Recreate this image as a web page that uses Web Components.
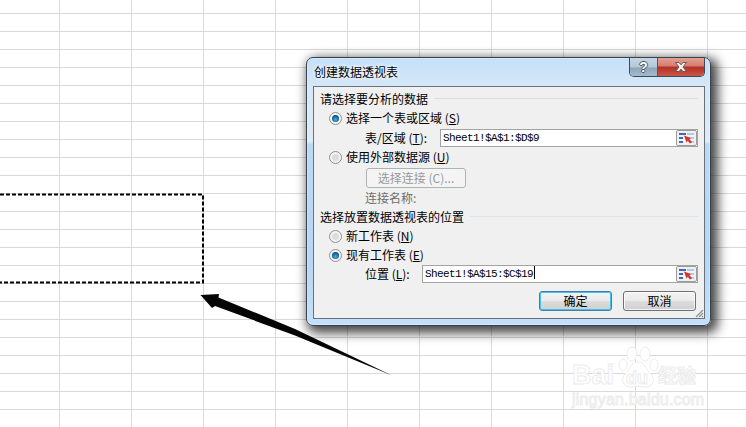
<!DOCTYPE html>
<html lang="zh-CN">
<head>
<meta charset="utf-8">
<title>创建数据透视表</title>
<style>
    html, body { margin: 0; padding: 0; background: #fff; }
    body { font: 12px "Noto Sans CJK SC", sans-serif; color: #000; }
</style>
</head>
<body>
<sheet-canvas>
    <copy-marquee></copy-marquee>
    <pointer-arrow></pointer-arrow>
    <pivot-dialog heading="创建数据透视表">
        <group-title>请选择要分析的数据</group-title>
        <radio-row checked>选择一个表或区域 (<u>S</u>)</radio-row>
        <range-row label-width="75" value="Sheet1!$A$1:$D$9">表/区域 (<u>T</u>):</range-row>
        <radio-row>使用外部数据源 (<u>U</u>)</radio-row>
        <push-button disabled class="connect">选择连接 (C)...</push-button>
        <muted-line>连接名称:</muted-line>
        <group-title tint>选择放置数据透视表的位置</group-title>
        <radio-row>新工作表 (<u>N</u>)</radio-row>
        <radio-row checked short>现有工作表 (<u>E</u>)</radio-row>
        <range-row label-width="57" value="Sheet1!$A$15:$C$19" caret>位置 (<u>L</u>):</range-row>
        <button-bar>
            <push-button primary>确定</push-button>
            <push-button>取消</push-button>
        </button-bar>
    </pivot-dialog>
    <baidu-mark></baidu-mark>
</sheet-canvas>

<script>
class SheetCanvas extends HTMLElement {
    constructor() {
        super();
        this.shadowDOM = this.attachShadow({ mode: 'open' });
    }
    connectedCallback() {
        this.shadowDOM.innerHTML = `
        <style>
            :host {
                display: block;
                position: relative;
                width: 746px;
                height: 427px;
                overflow: hidden;
                background-color: #fff;
                background-image:
                    linear-gradient(90deg, #d9d9d9 1px, transparent 1px),
                    linear-gradient(180deg, #d9d9d9 1px, transparent 1px);
                background-size: 72px 18px;
                background-position: 59px 13px;
            }
        </style>
        <slot></slot>`;
    }
}

class CopyMarquee extends HTMLElement {
    constructor() {
        super();
        this.shadowDOM = this.attachShadow({ mode: 'open' });
    }
    connectedCallback() {
        this.shadowDOM.innerHTML = `
        <style>
            :host { position: absolute; left: 0; top: 190px; width: 210px; height: 100px; }
            svg { display: block; }
        </style>
        <svg width="210" height="100" viewBox="0 190 210 100">
            <path d="M0 194.500H203V282.500H0" fill="none" stroke="#000" stroke-width="2" stroke-dasharray="4 2"/>
        </svg>`;
    }
}

class PointerArrow extends HTMLElement {
    constructor() {
        super();
        this.shadowDOM = this.attachShadow({ mode: 'open' });
    }
    connectedCallback() {
        this.shadowDOM.innerHTML = `
        <style>
            :host { position: absolute; left: 195px; top: 285px; width: 200px; height: 95px; }
            svg { display: block; }
        </style>
        <svg width="200" height="95" viewBox="195 285 200 95">
            <path d="M200.500 295L219 294L218.500 297.500L295 329L392 375.500L295 335.500L215 306L212 308Z" fill="#050505"/>
        </svg>`;
    }
}

class PivotDialog extends HTMLElement {
    constructor() {
        super();
        this.shadowDOM = this.attachShadow({ mode: 'open' });
    }
    connectedCallback() {
        this.shadowDOM.innerHTML = `
        <style>
            :host {
                position: absolute;
                left: 306px;
                top: 57px;
                width: 405px;
                height: 269px;
                box-sizing: border-box;
                display: flex;
                flex-direction: column;
                padding: 0 5px 6px 6px;
                border: 1px solid #39424b;
                border-radius: 7px;
                background: linear-gradient(180deg, #c4e0f8 0, #d5e7f8 28px, #dfebf6 84px, #bcd9f4 86px, #b6d6f4 200px, #c5e0f8 100%);
                box-shadow: 4px 4px 11px 3px rgba(0, 0, 0, .72), 0 0 0 1px rgba(255, 255, 255, .25) inset;
            }
            .caption {
                flex: none;
                height: 28px;
                display: flex;
                align-items: flex-start;
            }
            .title {
                flex: 1;
                padding: 6px 0 0 1px;
                line-height: 16px;
                font-size: 12px;
                color: #000;
                text-shadow: 0 0 4px #fff, 0 0 4px #fff;
            }
            .panel {
                flex: 1;
                display: flex;
                flex-direction: column;
                box-sizing: border-box;
                padding: 2px 6px 0 6px;
                border: 1px solid #66727d;
                background: #f0f0f0;
                position: relative;
            }
            .grip {
                position: absolute;
                right: 0;
                bottom: 0;
                width: 9px;
                height: 9px;
            }
        </style>
        <div class="caption">
            <div class="title">${this.getAttribute('heading')}</div>
            <caption-buttons></caption-buttons>
        </div>
        <div class="panel">
            <slot></slot>
            <svg class="grip" viewBox="0 0 9 9">
                <path d="M8 1L1 8M8 4L4 8M8 7L7 8" stroke="#8b949b" stroke-width="1.200" fill="none"/>
            </svg>
        </div>`;
    }
}

class CaptionButtons extends HTMLElement {
    constructor() {
        super();
        this.shadowDOM = this.attachShadow({ mode: 'open' });
    }
    connectedCallback() {
        this.shadowDOM.innerHTML = `
        <style>
            :host {
                display: flex;
                height: 19px;
                box-sizing: border-box;
                border: 1px solid #3e4a56;
                border-top: 0;
                border-radius: 0 0 5px 5px;
                overflow: hidden;
            }
            .help {
                width: 27px;
                display: flex;
                align-items: center;
                justify-content: center;
                background: linear-gradient(180deg, #c5d6e6 0, #b4c8da 50%, #8fa6ba 55%, #a4bace 100%);
                border-right: 1px solid #5a5560;
                font: bold 14px "Liberation Sans", sans-serif;
                color: #fff;
                text-shadow: 1px 0 0 #4b5560, -1px 0 0 #4b5560, 0 1px 0 #4b5560, 0 -1px 0 #4b5560;
            }
            .close {
                width: 46px;
                display: flex;
                align-items: center;
                justify-content: center;
                background: linear-gradient(180deg, #e3a194 0, #d57f70 42%, #b53126 52%, #c8574a 100%);
            }
        </style>
        <div class="help">?</div>
        <div class="close">
            <svg width="14" height="10" viewBox="0 0 14 10">
                <path d="M1.500 .5H5L7 2.800L9 .5H12.500L9 5L12.500 9.500H9L7 7.200L5 9.500H1.500L5 5Z" fill="#f1f1f1" stroke="#6a4a48" stroke-width=".9"/>
            </svg>
        </div>`;
    }
}

class GroupTitle extends HTMLElement {
    constructor() {
        super();
        this.shadowDOM = this.attachShadow({ mode: 'open' });
    }
    connectedCallback() {
        const line = this.hasAttribute('tint') ? '#dbe4ee' : '#dcdcdc';
        this.shadowDOM.innerHTML = `
        <style>
            :host {
                display: flex;
                align-items: center;
                flex: none;
                gap: 6px;
                height: 19px;
                line-height: 19px;
                color: #000;
            }
            i { flex: 1; height: 1px; background: ${line}; }
        </style>
        <slot></slot><i></i>`;
    }
}

class RadioRow extends HTMLElement {
    constructor() {
        super();
        this.shadowDOM = this.attachShadow({ mode: 'open' });
    }
    connectedCallback() {
        const on = this.hasAttribute('checked');
        const dot = on
            ? '<circle cx="6.500" cy="6.500" r="3.500" fill="url(#on)"/>'
            : '<circle cx="6.500" cy="6.500" r="3.500" fill="#dcdcdc"/>';
        this.shadowDOM.innerHTML = `
        <style>
            :host {
                display: flex;
                flex: none;
                align-items: center;
                gap: 4px;
                height: ${this.hasAttribute('short') ? 18 : 20}px;
                padding-left: 9px;
                line-height: 18px;
            }
            svg { flex: none; display: block; }
        </style>
        <svg width="13" height="13" viewBox="0 0 13 13">
            <defs>
                <radialGradient id="on" cx=".5" cy=".65" r=".6">
                    <stop offset="0" stop-color="#3fb4ea"/>
                    <stop offset="1" stop-color="#06487e"/>
                </radialGradient>
            </defs>
            <circle cx="6.500" cy="6.500" r="6" fill="#f4f4f4" stroke="#8e8f8f"/>
            ${dot}
        </svg>
        <span><slot></slot></span>`;
    }
}

class RangeRow extends HTMLElement {
    constructor() {
        super();
        this.shadowDOM = this.attachShadow({ mode: 'open' });
    }
    connectedCallback() {
        const caret = this.hasAttribute('caret') ? '<b></b>' : '';
        this.shadowDOM.innerHTML = `
        <style>
            :host {
                display: flex;
                flex: none;
                align-items: center;
                height: 18px;
                padding-left: 45px;
                margin-top: 1px;
            }
            .name { flex: none; width: ${this.getAttribute('label-width')}px; line-height: 18px; }
            .box {
                flex: 1;
                height: 18px;
                box-sizing: border-box;
                display: flex;
                align-items: center;
                border: 1px solid #a3a3a3;
                background: #fff;
                padding-left: 2px;
                font: 11px/16px "Liberation Mono", monospace;
                letter-spacing: -.6px;
            }
            .value { flex: 1; white-space: nowrap; }
            b { display: inline-block; width: 1px; height: 13px; margin-left: 1px; background: #000; vertical-align: -2px; }
        </style>
        <span class="name"><slot></slot></span>
        <div class="box">
            <span class="value">${this.getAttribute('value')}${caret}</span>
            <range-picker></range-picker>
        </div>`;
    }
}

class RangePicker extends HTMLElement {
    constructor() {
        super();
        this.shadowDOM = this.attachShadow({ mode: 'open' });
    }
    connectedCallback() {
        this.shadowDOM.innerHTML = `
        <style>
            :host {
                flex: none;
                width: 21px;
                height: 16px;
                box-sizing: border-box;
                border: 1px solid #9c9c9c;
                border-radius: 2px;
                background: #eef0f2;
                display: block;
            }
            svg { display: block; }
        </style>
        <svg width="19" height="14" viewBox="0 0 19 14">
            <rect x="2" y="2" width="15" height="10" fill="#eef3fa"/>
            <path d="M2 2H9V4H2ZM2 6H6V8H2ZM2 10H6V12H2Z" fill="#3f68b4"/>
            <path d="M10 3H17M11 7H17M12 11H17" stroke="#7d9bd0" stroke-width="1"/>
            <path d="M7 4.500L14 7L12.500 8.300L15 11L13 12.500L10.800 9.800L9.500 11.500Z" fill="#d8332a"/>
        </svg>`;
    }
}

class MutedLine extends HTMLElement {
    constructor() {
        super();
        this.shadowDOM = this.attachShadow({ mode: 'open' });
    }
    connectedCallback() {
        this.shadowDOM.innerHTML = `
        <style>
            :host {
                display: block;
                flex: none;
                height: 19px;
                line-height: 19px;
                padding-left: 45px;
                color: #6d6d6d;
            }
        </style>
        <slot></slot>`;
    }
}

class PushButton extends HTMLElement {
    constructor() {
        super();
        this.shadowDOM = this.attachShadow({ mode: 'open' });
    }
    connectedCallback() {
        this.shadowDOM.innerHTML = `
        <style>
            :host {
                display: flex;
                flex: none;
                align-items: center;
                justify-content: center;
                box-sizing: border-box;
                width: 73px;
                height: 20px;
                border: 1px solid #707070;
                border-radius: 3px;
                background: linear-gradient(180deg, #f3f3f3 0, #ebebeb 48%, #dcdcdc 52%, #cfcfcf 100%);
                box-shadow: inset 0 0 0 1px rgba(255, 255, 255, .75);
                line-height: 18px;
            }
            :host([primary]) {
                border-color: #3c7fb1;
                box-shadow: inset 0 0 0 1px #48c0ec;
            }
            :host([disabled]) {
                width: 100px;
                margin: 1px 0 0 46px;
                color: #9a9a9a;
                border-color: #adb2b5;
                background: #f4f4f4;
                box-shadow: none;
            }
        </style>
        <slot></slot>`;
    }
}

class ButtonBar extends HTMLElement {
    constructor() {
        super();
        this.shadowDOM = this.attachShadow({ mode: 'open' });
    }
    connectedCallback() {
        this.shadowDOM.innerHTML = `
        <style>
            :host {
                display: flex;
                flex: none;
                justify-content: flex-end;
                gap: 11px;
                margin-top: 8px;
                padding-right: 2px;
            }
        </style>
        <slot></slot>`;
    }
}

class BaiduMark extends HTMLElement {
    constructor() {
        super();
        this.shadowDOM = this.attachShadow({ mode: 'open' });
    }
    connectedCallback() {
        this.shadowDOM.innerHTML = `
        <style>
            :host {
                position: absolute;
                left: 572px;
                top: 346px;
                width: 136px;
                height: 64px;
                display: grid;
                grid-template-columns: 46px 40px 46px;
                grid-template-rows: 44px 20px;
                align-items: end;
                color: rgba(255, 255, 255, .9);
                -webkit-text-stroke: 1px #ececec;
                font-family: "Liberation Sans", sans-serif;
            }
            .bai { font-size: 27px; font-weight: bold; line-height: 28px; padding-bottom: 1px; }
            .paw { position: relative; height: 44px; }
            .paw svg { position: absolute; left: 0; top: 0; }
            .du {
                position: absolute;
                left: 8px;
                bottom: 2px;
                font-size: 18px;
                font-weight: bold;
                line-height: 20px;
            }
            .jy {
                font: bold 19px/26px "Noto Sans CJK SC", sans-serif;
                padding-bottom: 2px;
                white-space: nowrap;
            }
            .url {
                grid-column: 1 / -1;
                align-self: center;
                font-size: 16px;
                letter-spacing: .2px;
                line-height: 18px;
                white-space: nowrap;
            }
        </style>
        <span class="bai">Bai</span>
        <span class="paw">
            <svg width="42" height="44" viewBox="0 0 42 44" fill="rgba(255,255,255,.9)" stroke="#ececec" stroke-width="1">
                <ellipse cx="5" cy="19" rx="4" ry="6"/>
                <ellipse cx="14" cy="8" rx="5" ry="7"/>
                <ellipse cx="27" cy="8" rx="5" ry="7"/>
                <ellipse cx="36" cy="19" rx="4" ry="6"/>
                <path d="M20 16C27 16 28 24 33 28C38 33 35 42 26 41C22 40 18 40 14 41C5 42 2 33 7 28C12 24 13 16 20 16Z"/>
            </svg>
            <span class="du">du</span>
        </span>
        <span class="jy">经验</span>
        <span class="url">jingyan.baidu.com</span>`;
    }
}

customElements.define('sheet-canvas', SheetCanvas);
customElements.define('copy-marquee', CopyMarquee);
customElements.define('pointer-arrow', PointerArrow);
customElements.define('pivot-dialog', PivotDialog);
customElements.define('caption-buttons', CaptionButtons);
customElements.define('group-title', GroupTitle);
customElements.define('radio-row', RadioRow);
customElements.define('range-row', RangeRow);
customElements.define('range-picker', RangePicker);
customElements.define('muted-line', MutedLine);
customElements.define('push-button', PushButton);
customElements.define('button-bar', ButtonBar);
customElements.define('baidu-mark', BaiduMark);
</script>
</body>
</html>
